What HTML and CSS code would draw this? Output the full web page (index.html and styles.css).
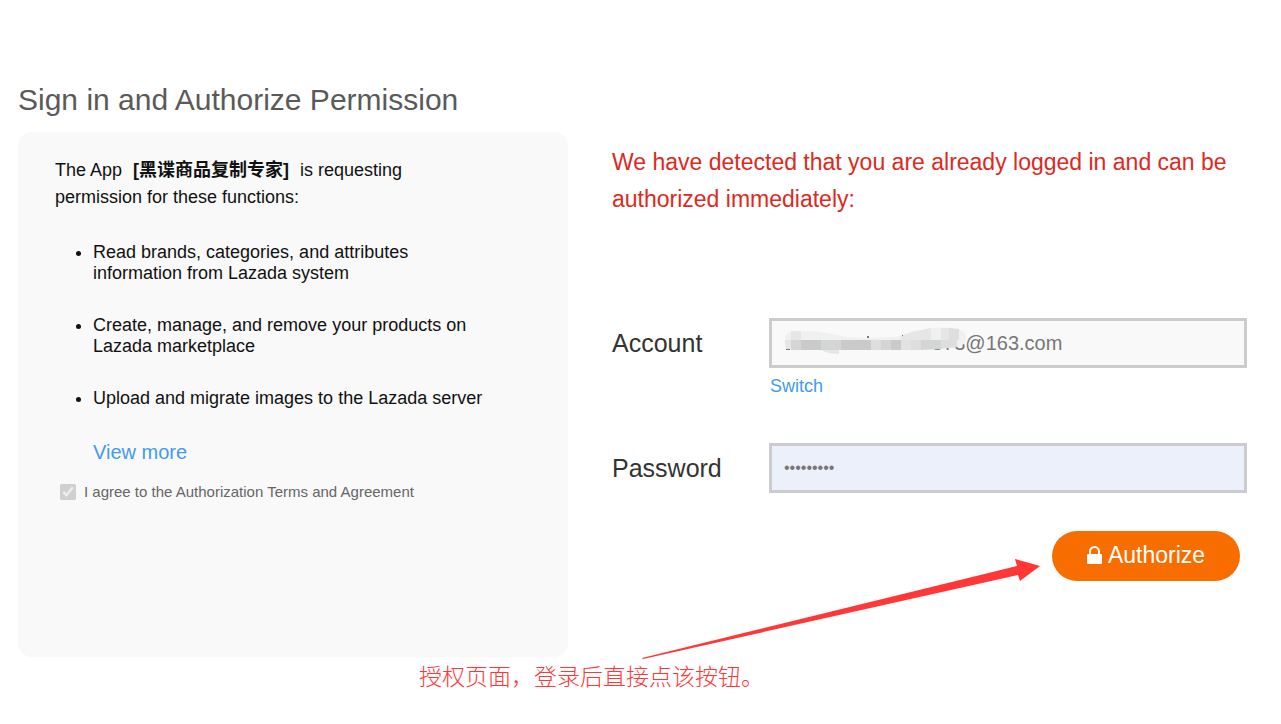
FILE: index.html
```html
<!DOCTYPE html>
<html lang="en">
<head>
  <meta charset="UTF-8">
  <meta name="viewport" content="width=device-width, initial-scale=1">
  <title>Sign in and Authorize Permission</title>
  <link rel="stylesheet" href="styles.css">
</head>
<body>

  <main class="page">
    <h1 class="page-title">Sign in and Authorize Permission</h1>

    <div class="columns">
      <!-- Requested permissions -->
      <section class="panel">
        <p class="intro">The App <strong class="app-name">[黑谍商品复制专家]</strong> is requesting permission for these functions:</p>

        <ul class="permissions">
          <li>Read brands, categories, and attributes information from Lazada system</li>
          <li>Create, manage, and remove your products on Lazada marketplace</li>
          <li>Upload and migrate images to the Lazada server</li>
        </ul>
        <a class="view-more" href="#">View more</a>

        <div class="agree">
          <input type="checkbox" id="agree" checked disabled>
          <label for="agree">I agree to the Authorization Terms and Agreement</label>
        </div>
      </section>

      <!-- Login form -->
      <form class="login">
        <p class="notice">We have detected that you are already logged in and can be authorized immediately:</p>

        <div class="field">
          <label for="account">Account</label>
          <div class="control">
            <input class="text-input account-input" type="text" id="account" value="573@163.com" readonly>
            <!-- Hides the first part of the address -->
            <svg class="mask" width="184" height="30" viewBox="0 0 184 30" aria-hidden="true">
              <path fill="#f0f0f0" d="M2 12 Q3 4 12 4 L28 4 L50 7 L64 10 L82 11 L112 10 L124 7 L142 2 Q160 -1 176 2 Q184 5 183 13 Q181 19 174 20 L148 22 L56 23 L56 27 L46 26 L36 23 L8 23 Q0 20 2 12Z"/>
              <path fill="#e6e6e6" d="M8 4h10v9H8zM2 13h6v9H3zM38 23h18v4L46 26zM118 9l10-4v8h-10zM128 5l10-2v10h-10zM138 3l10-2v12h-10zM158 1h8v12h-8z"/>
              <path fill="#d4d6d5" d="M8 13h10v10H8zM38 13h10v10H38zM48 13h10v10H48zM98 13h10v10H98zM138 13h20v9l-20 1z"/>
              <path fill="#dedede" d="M18 13h10v10H18zM68 13h10v10H68zM88 13h10v10H88zM128 13h10v10h-10zM158 13h16v7l-16 2zM166 1l10 1v11h-10z"/>
              <path fill="#cacaca" d="M18 13h20v10H18zM58 13h30v10H58zM108 13h10v10h-10z"/>
              <path fill="#e2e2e0" d="M118 13h10v10h-10z"/>
              <path fill="#777" d="M3 22h4v1H3zM84 9h2v2h-2zM119 8h1v1h-1z"/>
            </svg>
          </div>
          <a class="switch" href="#">Switch</a>
        </div>

        <div class="field">
          <label for="password">Password</label>
          <div class="control">
            <input class="text-input password-input" type="password" id="password" value="*********" readonly>
          </div>
        </div>

        <div class="actions">
          <svg class="arrow" width="398" height="101" viewBox="0 0 398 101" aria-hidden="true">
            <path fill="#ff3737" d="M0 99 L375 7 L373 0 L398 7 L378 22 L376 16 L1 100Z"/>
          </svg>
          <button class="authorize" type="button">
            <svg class="lock" width="15" height="18" viewBox="0 0 15 18" aria-hidden="true">
              <rect x="0" y="8" width="15" height="10" rx="1" fill="#fff"/>
              <path fill="none" stroke="#fff" stroke-width="2" d="M3 9V5.500a4.500 4.500 0 0 1 9 0V9"/>
            </svg>
            Authorize
          </button>
        </div>
      </form>
    </div>

    <p class="caption" lang="zh-CN">授权页面，登录后直接点该按钮。</p>
  </main>

</body>
</html>
```
FILE: styles.css
```css
* {
  box-sizing: border-box;
}

body {
  font-family: "Liberation Sans", Arial, "Noto Sans CJK SC", sans-serif;
  margin: 0;
  background-color: #fff;
  color: #111;
}

a {
  color: #3f9cf0;
  text-decoration: none;
}

.page {
  padding: 80px 34px 24px 18px;
}

.page-title {
  margin: 0 0 12px;
  font-size: 30px;
  font-weight: normal;
  line-height: 40px;
  color: #5a5a5a;
}

.columns {
  display: grid;
  grid-template-columns: 550fr 635fr;
  gap: 44px;
}

/* Left panel */
.panel {
  min-height: 525px;
  padding: 25px 80px 24px 37px;
  background-color: #f9f9f9;
  border-radius: 14px;
  font-size: 18px;
}

.intro {
  margin: 0;
  line-height: 27px;
}

.app-name {
  margin: 0 6px;
}

.permissions {
  margin: 31px 0;
  padding-left: 38px;
  line-height: 21px;
}

.permissions li + li {
  margin-top: 31px;
}

.view-more {
  display: block;
  margin-left: 38px;
  font-size: 20px;
  line-height: 24px;
}

.agree {
  display: flex;
  align-items: center;
  gap: 8px;
  margin: 18px 0 0 5px;
  font-size: 15px;
  line-height: 20px;
  color: #666;
}

.agree input {
  width: 16px;
  height: 16px;
  margin: 0;
}

/* Right side */
.notice {
  margin: 12px 0 100px;
  font-size: 23px;
  line-height: 37px;
  color: #dc2a1e;
}

.field {
  display: grid;
  grid-template-columns: 157px 1fr;
  align-items: center;
  min-height: 50px;
}

.field label {
  font-size: 25px;
  color: #333;
}

.control {
  position: relative;
}

.text-input {
  display: block;
  width: 100%;
  height: 50px;
  padding: 0 12px;
  border: 3px solid #ccc;
  border-radius: 0;
  outline: none;
  background-color: #f9f9f9;
  font-family: inherit;
  font-size: 20px;
  color: #777;
}

.account-input {
  padding-left: 160px;
}

.password-input {
  background-color: #ebf0fa;
  font-size: 16px;
}

.mask {
  position: absolute;
  left: 14px;
  top: 9px;
}

.switch {
  grid-column: 2;
  justify-self: start;
  margin: 7px 0 46px 1px;
  font-size: 18px;
  line-height: 22px;
}

.actions {
  position: relative;
  width: 188px;
  margin: 38px 7px 0 auto;
}

.authorize {
  display: flex;
  align-items: center;
  justify-content: center;
  gap: 6px;
  width: 100%;
  height: 50px;
  padding: 0 0 2px;
  border: none;
  border-radius: 25px;
  background-color: #f76d00;
  color: #fff;
  font-family: inherit;
  font-size: 23px;
  cursor: pointer;
}

.arrow {
  position: absolute;
  right: calc(100% + 12px);
  top: 28px;
}

.caption {
  margin: 2px 0 0;
  padding-left: 401px;
  font-family: "Noto Sans CJK SC", sans-serif;
  font-size: 23px;
  font-weight: 300;
  line-height: 32px;
  color: #ff3737;
}
```
